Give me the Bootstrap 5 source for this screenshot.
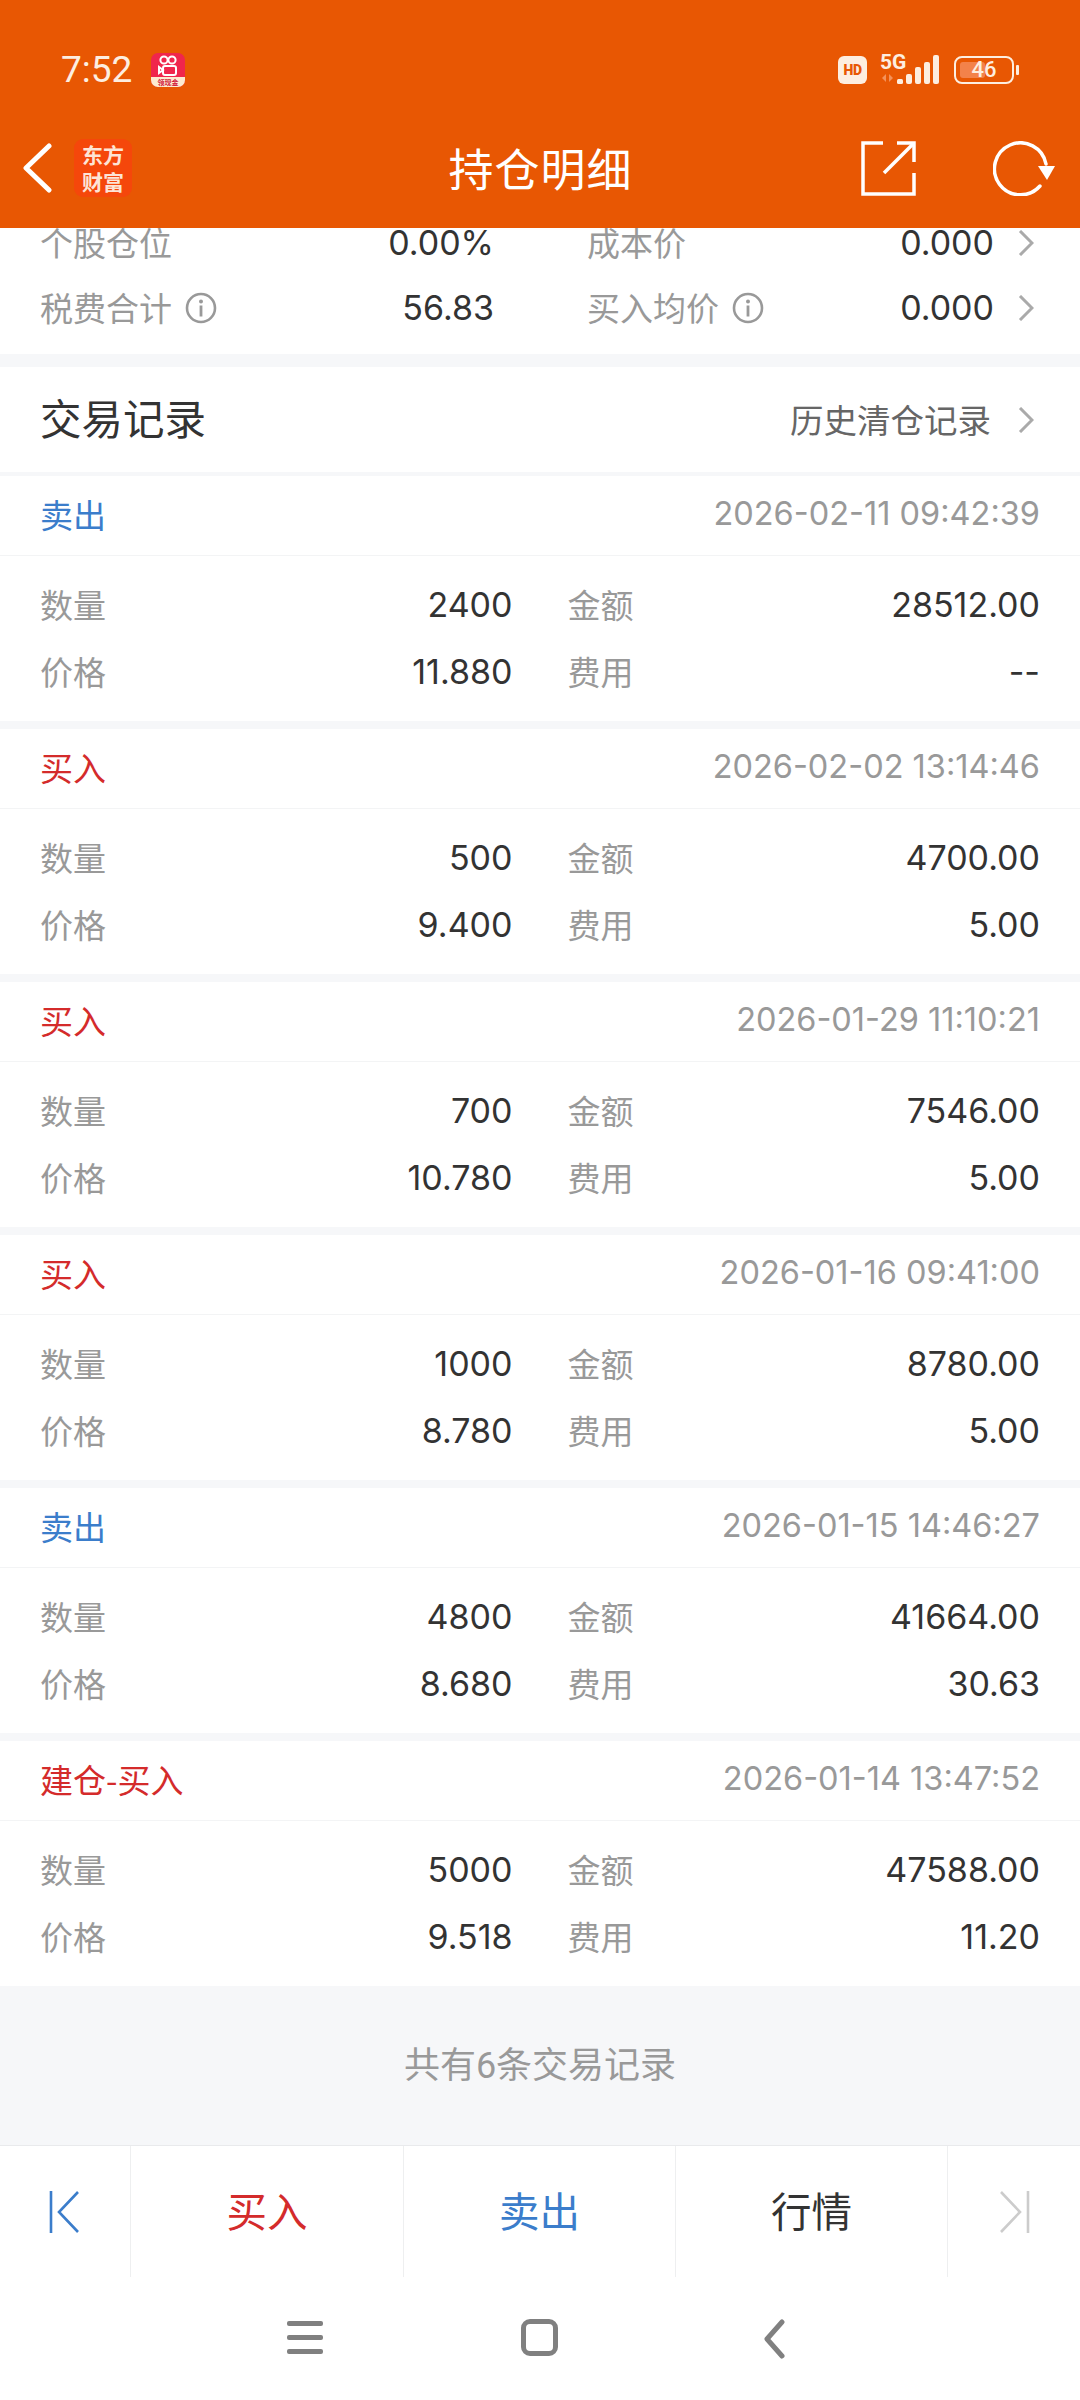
<!DOCTYPE html>
<html lang="zh-CN">
<head>
<meta charset="utf-8">
<title>持仓明细</title>
<link href="https://cdn.jsdelivr.net/npm/bootstrap@5.3.0/dist/css/bootstrap.min.css" rel="stylesheet">
<style>
html,body{margin:0;background:#fff}
body{width:1080px;height:2400px;overflow:hidden;font-family:Inter,"Noto Sans CJK SC",sans-serif;color:#333}
.hdr{background:#e85703;color:#fff;position:relative;z-index:2;height:228px}
.stat{height:108px;padding:53px 61px 0 61px;color:#fdeee0}
.clock{font-family:Roboto,sans-serif;font-size:37px;line-height:34px;font-weight:400;width:90px}
.kicon{width:34px;height:34px;display:block}
.stat-r{gap:13px;height:34px}
.hdpill{width:29px;height:28px;border-radius:6px;background:#fdeee0;color:#e85703;font-family:Roboto,sans-serif;font-size:14px;font-weight:900;line-height:28px;text-align:center;letter-spacing:-.5px}
.five{width:60px;height:30px;position:relative}
.five-t{position:absolute;left:0;top:-4px;font-family:Roboto,sans-serif;font-size:21px;font-weight:700;line-height:22px}
.batt{width:60px;height:28px;border:2.5px solid #fdeee0;border-radius:8px;position:relative;margin-left:1px}
.batt-f{position:absolute;left:4px;top:4px;bottom:4px;width:25px;background:#f3824a;border-radius:3px}
.batt-t{position:absolute;inset:0;text-align:center;font-family:Roboto,sans-serif;font-size:22px;line-height:23px;font-weight:500;color:#fdeee0}
.nub{width:3px;height:10px;background:#fdeee0;border-radius:1px;margin-left:-11px}
.navrow{height:120px}
.nav-side{flex:1 1 0;min-width:0}
.backwrap{padding-left:22px}
.logo{width:58px;height:58px;background:#f5470b;border-radius:9px;margin-left:22px;padding-top:2px;font-family:"Noto Sans CJK SC",sans-serif;font-weight:700;font-size:21px;line-height:27px;text-align:center;color:#fde4d6}
.ttl{font-family:"Noto Sans CJK SC",sans-serif;font-size:45px;line-height:60px;width:184px;text-align:center;white-space:nowrap;letter-spacing:1px;padding-left:2px}
.nav-r{padding-right:25px;gap:77px}
.info{margin-top:-18px;padding:0 46px 14px 40px}
.inrow{height:65px}
.inlab{color:#999;font-family:"Noto Sans CJK SC",sans-serif;font-size:33px}
.inv{font-size:34px;color:#333}
.inc1{width:454px}
.inc2{width:407px;margin-left:93px}
.chev{margin-left:24px;flex:none}
.chev-w{margin-left:27px}
.ii{margin-left:13px;flex:none}
.band4{height:4px;background:#f6f7f9}
.band8{height:8px;background:#f6f7f9}
.band13{height:13px;background:#f6f7f9}
.sect{height:105px;padding:0 46px 0 40px}
.sect-t{font-family:"Noto Sans CJK SC",sans-serif;font-size:41.5px;line-height:56px;color:#333;margin-top:-6px}
.sect-l{font-family:"Noto Sans CJK SC",sans-serif;font-size:33.5px;color:#666}
.rhead{height:80px;padding:0 40px;border-bottom:1px solid #f3f4f5}
.rtype{font-family:"Noto Sans CJK SC",sans-serif;font-size:33px;line-height:40px;margin-top:-4px}
.buy{color:#d42b2b}
.sell{color:#3b7dcb}
.rtime{font-size:32.5px;color:#999;margin-top:-2px}
.rbody{padding:15px 40px 16px}
.rrow{height:67px;gap:55px}
.half{flex:1 1 0;min-width:0}
.rlab{font-family:"Noto Sans CJK SC",sans-serif;color:#999;font-size:33px}
.rval{font-size:34px;color:#333}
.foot{height:160px;background:#f6f7f9;border-bottom:1px solid #e9eaec;color:#999;font-size:36px;font-family:Roboto,"Noto Sans CJK SC",sans-serif}
.tabs{display:grid;grid-template-columns:131px 273px 272px 272px 132px;height:131px}
.tabc{border-right:1px solid #eeeff0;font-family:"Noto Sans CJK SC",sans-serif;font-size:40.5px}
.tabc span{margin-top:-3px}
.tabc:last-child{border-right:0}
.tabc.mk{color:#333}
.sysnav{height:123px;padding:42px 0 0 287px}
.gap1{margin-left:198px}
.gap2{margin-left:204px}
.bars{width:36px;height:38px;gap:9px;padding-top:2px}
.bar1{height:5px;background:#808080;border-radius:2px}
.sq{width:37px;height:37px;border:5px solid #808080;border-radius:9px}
</style>
</head>
<body>
<header class="hdr">
  <div class="stat d-flex align-items-start justify-content-between">
    <div class="d-flex align-items-center">
      <div class="clock">7:52</div>
      <svg class="kicon" viewBox="0 0 34 34"><rect width="34" height="34" rx="7" fill="#f0264c"/><path d="M0 24h34v3a7 7 0 0 1-7 7H7a7 7 0 0 1-7-7z" fill="#fdebd0"/><g fill="none" stroke="#fff" stroke-width="2"><circle cx="13" cy="7" r="3.6"/><circle cx="21" cy="7" r="3.6"/><rect x="12" y="13" width="13" height="9" rx="2"/><path d="M12 17l-4-3v6z"/></g><text x="17" y="32" font-size="7" font-weight="700" text-anchor="middle" fill="#d01a3c" font-family="Noto Sans CJK SC">领现金</text></svg>
    </div>
    <div class="stat-r d-flex align-items-center">
      <div class="hdpill">HD</div>
      <div class="five">
        <span class="five-t">5G</span>
        <svg width="60" height="30" viewBox="0 0 60 30" class="d-block"><path d="M2 23l4-4v8zM9 19l4 4-4 4z" fill="#f4925a"/><g fill="#fdeee0"><rect x="17" y="24" width="6" height="5" rx="1.5"/><rect x="26" y="19" width="6" height="10" rx="2"/><rect x="35" y="12" width="6" height="17" rx="2"/><rect x="44" y="7" width="6" height="22" rx="2"/><rect x="53" y="0" width="6" height="29" rx="2"/></g></svg>
      </div>
      <div class="batt"><div class="batt-f"></div><div class="batt-t">46</div></div>
      <div class="nub"></div>
    </div>
  </div>
  <div class="navrow d-flex align-items-center">
    <div class="nav-side backwrap d-flex align-items-center">
      <svg width="30" height="50" viewBox="0 0 30 50"><path d="M27 3L4 25l23 22" fill="none" stroke="#fff" stroke-width="5" stroke-linecap="round" stroke-linejoin="round"/></svg>
      <div class="logo">东方<br>财富</div>
    </div>
    <div class="ttl">持仓明细</div>
    <div class="nav-side nav-r d-flex align-items-center justify-content-end">
      <svg width="55" height="55" viewBox="0 0 55 55"><g fill="none" stroke="#fff" stroke-width="3.5" stroke-linejoin="miter"><path d="M22 2H2v51h51V32"/><path d="M23 32L52 3"/><path d="M36 2h17v19"/></g></svg>
      <svg width="62" height="55" viewBox="0 0 62 55"><path d="M47 45A26 26 0 1 1 53 23" fill="none" stroke="#fff" stroke-width="3.5" stroke-linecap="round"/><path d="M45 25h17l-8 14z" fill="#fff"/></svg>
    </div>
  </div>
</header>

<section class="info">
  <div class="inrow d-flex align-items-center">
    <div class="inc1 d-flex justify-content-between align-items-center"><span class="inlab">个股仓位</span><span class="inv">0.00%</span></div>
    <div class="inc2 d-flex justify-content-between align-items-center"><span class="inlab">成本价</span><span class="inv">0.000</span></div>
    <svg class="chev" width="16" height="26" viewBox="0 0 16 26"><path d="M2 1l12 12L2 25" fill="none" stroke="#aaa" stroke-width="3"/></svg>
  </div>
  <div class="inrow d-flex align-items-center">
    <div class="inc1 d-flex align-items-center"><span class="inlab">税费合计</span><svg class="ii" width="32" height="32" viewBox="0 0 32 32"><circle cx="16" cy="16" r="14" fill="none" stroke="#999" stroke-width="2.6"/><circle cx="16" cy="9.5" r="2" fill="#999"/><rect x="14.6" y="13.5" width="2.8" height="11" fill="#999"/></svg><span class="inv ms-auto">56.83</span></div>
    <div class="inc2 d-flex align-items-center"><span class="inlab">买入均价</span><svg class="ii" width="32" height="32" viewBox="0 0 32 32"><circle cx="16" cy="16" r="14" fill="none" stroke="#999" stroke-width="2.6"/><circle cx="16" cy="9.5" r="2" fill="#999"/><rect x="14.6" y="13.5" width="2.8" height="11" fill="#999"/></svg><span class="inv ms-auto">0.000</span></div>
    <svg class="chev" width="16" height="26" viewBox="0 0 16 26"><path d="M2 1l12 12L2 25" fill="none" stroke="#aaa" stroke-width="3"/></svg>
  </div>
</section>
<div class="band13"></div>
<div class="sect d-flex align-items-center justify-content-between">
  <span class="sect-t">交易记录</span>
  <div class="d-flex align-items-center"><span class="sect-l">历史清仓记录</span><svg class="chev chev-w" width="16" height="26" viewBox="0 0 16 26"><path d="M2 1l12 12L2 25" fill="none" stroke="#aaa" stroke-width="3"/></svg></div>
</div>
<div class="band4"></div>

<article>
  <div class="rhead d-flex align-items-center justify-content-between"><span class="rtype sell">卖出</span><span class="rtime">2026-02-11 09:42:39</span></div>
  <div class="rbody">
    <div class="rrow d-flex align-items-center"><div class="half d-flex justify-content-between align-items-center"><span class="rlab">数量</span><span class="rval">2400</span></div><div class="half d-flex justify-content-between align-items-center"><span class="rlab">金额</span><span class="rval">28512.00</span></div></div>
    <div class="rrow d-flex align-items-center"><div class="half d-flex justify-content-between align-items-center"><span class="rlab">价格</span><span class="rval">11.880</span></div><div class="half d-flex justify-content-between align-items-center"><span class="rlab">费用</span><span class="rval">--</span></div></div>
  </div>
</article>
<div class="band8"></div>
<article>
  <div class="rhead d-flex align-items-center justify-content-between"><span class="rtype buy">买入</span><span class="rtime">2026-02-02 13:14:46</span></div>
  <div class="rbody">
    <div class="rrow d-flex align-items-center"><div class="half d-flex justify-content-between align-items-center"><span class="rlab">数量</span><span class="rval">500</span></div><div class="half d-flex justify-content-between align-items-center"><span class="rlab">金额</span><span class="rval">4700.00</span></div></div>
    <div class="rrow d-flex align-items-center"><div class="half d-flex justify-content-between align-items-center"><span class="rlab">价格</span><span class="rval">9.400</span></div><div class="half d-flex justify-content-between align-items-center"><span class="rlab">费用</span><span class="rval">5.00</span></div></div>
  </div>
</article>
<div class="band8"></div>
<article>
  <div class="rhead d-flex align-items-center justify-content-between"><span class="rtype buy">买入</span><span class="rtime">2026-01-29 11:10:21</span></div>
  <div class="rbody">
    <div class="rrow d-flex align-items-center"><div class="half d-flex justify-content-between align-items-center"><span class="rlab">数量</span><span class="rval">700</span></div><div class="half d-flex justify-content-between align-items-center"><span class="rlab">金额</span><span class="rval">7546.00</span></div></div>
    <div class="rrow d-flex align-items-center"><div class="half d-flex justify-content-between align-items-center"><span class="rlab">价格</span><span class="rval">10.780</span></div><div class="half d-flex justify-content-between align-items-center"><span class="rlab">费用</span><span class="rval">5.00</span></div></div>
  </div>
</article>
<div class="band8"></div>
<article>
  <div class="rhead d-flex align-items-center justify-content-between"><span class="rtype buy">买入</span><span class="rtime">2026-01-16 09:41:00</span></div>
  <div class="rbody">
    <div class="rrow d-flex align-items-center"><div class="half d-flex justify-content-between align-items-center"><span class="rlab">数量</span><span class="rval">1000</span></div><div class="half d-flex justify-content-between align-items-center"><span class="rlab">金额</span><span class="rval">8780.00</span></div></div>
    <div class="rrow d-flex align-items-center"><div class="half d-flex justify-content-between align-items-center"><span class="rlab">价格</span><span class="rval">8.780</span></div><div class="half d-flex justify-content-between align-items-center"><span class="rlab">费用</span><span class="rval">5.00</span></div></div>
  </div>
</article>
<div class="band8"></div>
<article>
  <div class="rhead d-flex align-items-center justify-content-between"><span class="rtype sell">卖出</span><span class="rtime">2026-01-15 14:46:27</span></div>
  <div class="rbody">
    <div class="rrow d-flex align-items-center"><div class="half d-flex justify-content-between align-items-center"><span class="rlab">数量</span><span class="rval">4800</span></div><div class="half d-flex justify-content-between align-items-center"><span class="rlab">金额</span><span class="rval">41664.00</span></div></div>
    <div class="rrow d-flex align-items-center"><div class="half d-flex justify-content-between align-items-center"><span class="rlab">价格</span><span class="rval">8.680</span></div><div class="half d-flex justify-content-between align-items-center"><span class="rlab">费用</span><span class="rval">30.63</span></div></div>
  </div>
</article>
<div class="band8"></div>
<article>
  <div class="rhead d-flex align-items-center justify-content-between"><span class="rtype buy">建仓-买入</span><span class="rtime">2026-01-14 13:47:52</span></div>
  <div class="rbody">
    <div class="rrow d-flex align-items-center"><div class="half d-flex justify-content-between align-items-center"><span class="rlab">数量</span><span class="rval">5000</span></div><div class="half d-flex justify-content-between align-items-center"><span class="rlab">金额</span><span class="rval">47588.00</span></div></div>
    <div class="rrow d-flex align-items-center"><div class="half d-flex justify-content-between align-items-center"><span class="rlab">价格</span><span class="rval">9.518</span></div><div class="half d-flex justify-content-between align-items-center"><span class="rlab">费用</span><span class="rval">11.20</span></div></div>
  </div>
</article>

<div class="foot d-flex align-items-center justify-content-center">共有6条交易记录</div>

<nav class="tabs">
  <div class="tabc d-flex align-items-center justify-content-center"><svg width="32" height="44" viewBox="0 0 32 44"><path d="M2 1v42" stroke="#3b7dcb" stroke-width="2.6" fill="none"/><path d="M29 2L10 22l19 20" stroke="#3b7dcb" stroke-width="2.6" fill="none"/></svg></div>
  <div class="tabc buy d-flex align-items-center justify-content-center"><span>买入</span></div>
  <div class="tabc sell d-flex align-items-center justify-content-center"><span>卖出</span></div>
  <div class="tabc mk d-flex align-items-center justify-content-center"><span>行情</span></div>
  <div class="tabc d-flex align-items-center justify-content-center"><svg width="32" height="44" viewBox="0 0 32 44"><path d="M30 1v42" stroke="#ccc" stroke-width="2.6" fill="none"/><path d="M3 2l19 20L3 42" stroke="#ccc" stroke-width="2.6" fill="none"/></svg></div>
</nav>
<div class="sysnav d-flex align-items-start">
  <div class="bars d-flex flex-column"><div class="bar1"></div><div class="bar1"></div><div class="bar1"></div></div>
  <div class="sq gap1"></div>
  <svg class="gap2" width="24" height="40" viewBox="0 0 24 40"><path d="M20 3L5 20l15 17" fill="none" stroke="#808080" stroke-width="5" stroke-linecap="round" stroke-linejoin="round"/></svg>
</div>
<script src="https://cdn.jsdelivr.net/npm/bootstrap@5.3.0/dist/js/bootstrap.bundle.min.js"></script>
</body>
</html>
